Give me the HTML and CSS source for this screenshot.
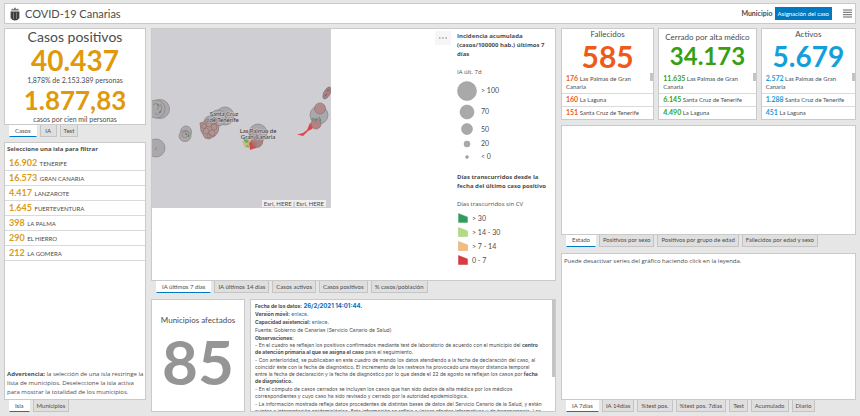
FILE: index.html
```html
<!DOCTYPE html>
<html lang="es">
<head>
<meta charset="utf-8">
<title>COVID-19 Canarias</title>
<link rel="stylesheet" href="styles.css">
</head>
<body>
<header class="bar">
  <svg class="crest" viewBox="0 0 10 14" aria-hidden="true">
    <path d="M1 3.4 2 1.4 3.4 2.2 5 .3 6.6 2.2 8 1.4 9 3.4Z" fill="#777"/>
    <path d="M1 4.4h8v6.2c0 2-2 2.9-4 3-2-.1-4-1-4-3z" fill="#3d3d3d"/>
    <path d="M.6 4.4v7M9.400 4.400v7" stroke="#999" stroke-width=".8"/>
    <path d="M3.500 5.500v6.500M6.500 5.500v6.500" stroke="#999" stroke-width=".7"/>
  </svg>
  <h1>COVID-19 Canarias</h1>
  <span class="bar-label" id="mun">Municipio</span>
  <button class="primary" aria-labelledby="mun asig"><span id="asig">Asignación del caso</span></button>
  <button class="menu" aria-label="Menú"><svg viewBox="0 0 9 9"><path d="M0 1h9M0 3.300h9M0 5.700h9M0 8h9" stroke="#555" stroke-width=".9"/></svg></button>
</header>
<main class="dash">
  <div class="col left">
    <section class="stack">
      <div class="panel totals">
        <h2>Casos positivos</h2>
        <strong class="n-big">40.437</strong>
        <p>1,878% de 2.153.389 personas</p>
        <strong class="n-mid">1.877,83</strong>
        <p>casos por cien mil personas</p>
      </div>
      <nav class="tabs"><button class="on">Casos</button><button>IA</button><button>Test</button></nav>
    </section>
    <section class="stack grow">
      <div class="panel islands">
        <h3>Seleccione una isla para filtrar</h3>
        <ul>
          <li><b>16.902</b> TENERIFE</li>
          <li><b>16.573</b> GRAN CANARIA</li>
          <li><b>4.417</b> LANZAROTE</li>
          <li><b>1.645</b> FUERTEVENTURA</li>
          <li><b>398</b> LA PALMA</li>
          <li><b>290</b> EL HIERRO</li>
          <li><b>212</b> LA GOMERA</li>
        </ul>
        <p class="warn"><b>Advertencia:</b> la selección de una isla restringe la<br>lista de municipios. Deseleccione la isla activa<br>para mostrar la totalidad de los municipios.</p>
      </div>
      <nav class="tabs"><button class="on">Isla</button><button>Municipios</button></nav>
    </section>
  </div>

  <div class="col middle">
    <section class="stack grow">
      <div class="panel mapbox">
        <div class="map">
          <svg viewBox="0 0 179 179" role="img" aria-label="Mapa de Canarias">
            <g fill="#aaa8ab" stroke="#8b898c" stroke-width=".8">
              <circle cx="8" cy="80" r="9.500"/><circle cx="4" cy="80" r="9"/>
              <circle cx="4" cy="119" r="9"/>
              <ellipse cx="34" cy="103" rx="5.500" ry="6"/><ellipse cx="33" cy="107" rx="6" ry="5.500"/>
              <circle cx="73" cy="87" r="9"/><circle cx="66" cy="89" r="8"/><circle cx="58" cy="93" r="6"/>
              <circle cx="106" cy="104" r="9"/><circle cx="104" cy="111" r="7"/>
              <circle cx="167" cy="86" r="9"/>
            </g>
            <path d="M48 94l4-1 3-3 6 2 6 5-1 6-3 4-6 3-4-1-4-7z" fill="#ad9491" stroke="#8c6f70" stroke-width=".7"/>
            <g fill="none" stroke="#906d6c" stroke-width=".6">
              <circle cx="52" cy="97" r="2.500"/><circle cx="57" cy="95" r="3"/><circle cx="62" cy="98" r="3"/><circle cx="54" cy="102" r="3"/><circle cx="60" cy="104" r="3"/><circle cx="57" cy="107" r="2"/><circle cx="62" cy="92" r="3"/>
              <path d="M1 76l3-2 3 3-2 4M8 75l2 4-2 5M3 84l3 2M3 121l2-3M31 103l4-1 2 4-4 3-3-2z"/>
            </g>
            <path d="M5 75l2 2M9 82l-2 2M33 104l2 2M37 106l-1 2" stroke="#5b8f68" stroke-width="1.500"/>
            <path d="M90 112l6-3 3 3-2 6-4 1z" fill="#c9bb7d"/>
            <path d="M91 110l3-1 3 4-3 1zM94 117l2-1 1 3z" fill="#65a765"/>
            <path d="M97 114l3-2 5 2-1 5-6 2z" fill="#cf4d4d"/>
            <circle cx="105" cy="113" r="5.500" fill="#a77c7c" stroke="#8b6969" stroke-width=".6" opacity=".8"/>
            <path d="M97 104l2 3M104 104l1 5" stroke="#c06464" stroke-width="1"/>
            <path d="M145 105.500l6-1.500 4-3 3-7 4 3-2 3-4 2-5 5z" fill="#dd4549"/>
            <circle cx="168" cy="79.500" r="5.500" fill="#b08b8c" stroke="#996f70" stroke-width=".7"/>
            <circle cx="164" cy="95" r="5" fill="#b08385" stroke="#8f6f72" stroke-width=".7"/>
            <path d="M159 91l3-2M163 93l2-4M169 92l-2-4" stroke="#599277" stroke-width="1.200"/>
            <ellipse cx="175" cy="64" rx="3" ry="6.500" transform="rotate(28 175 64)" fill="#9c8688" stroke="#7d6a6d" stroke-width=".7"/>
            <path d="M173 67l2-2M175 62l2-1" stroke="#a63f47" stroke-width="1"/>
            <g class="maplabel" text-anchor="middle">
              <text x="72" y="87">Santa Cruz</text><text x="72" y="93">de Tenerife</text>
              <text x="106" y="104">Las Palmas de</text><text x="106" y="110">Gran Canaria</text>
            </g>
          </svg>
          <span class="credit">Esri, HERE | Esri, HERE</span>
        </div>
        <button class="more" aria-label="Opciones"><svg viewBox="0 0 8 2"><path d="M0 1h1.500M3.200 1h1.500M6.400 1h1.500" stroke="#777" stroke-width="1"/></svg></button>
        <aside class="legend">
          <h3>Incidencia acumulada<br>(casos/100000 hab.) últimos 7<br>días</h3>
          <p>IA últ. 7d</p>
          <ul class="sizes">
            <li class="s1"><svg viewBox="0 0 20 20"><circle cx="10" cy="10" r="9.500"/></svg>&gt; 100</li>
            <li class="s2"><svg viewBox="0 0 20 20"><circle cx="10" cy="10" r="7"/></svg>70</li>
            <li class="s3"><svg viewBox="0 0 20 20"><circle cx="10" cy="10" r="5.500"/></svg>50</li>
            <li class="s4"><svg viewBox="0 0 20 20"><circle cx="10" cy="10" r="3"/></svg>20</li>
            <li class="s4"><svg viewBox="0 0 20 20"><circle cx="10" cy="10" r="1.500"/></svg>&lt; 0</li>
          </ul>
          <h3>Días transcurridos desde la<br>fecha del último caso positivo</h3>
          <p>Días trascurridos sin CV</p>
          <ul class="colors">
            <li><svg viewBox="0 0 10 10"><path d="M.500.500 9.500 4v5.500h-9z" fill="#329a5d" stroke="#55a877" stroke-width=".5"/></svg>&gt; 30</li>
            <li><svg viewBox="0 0 10 10"><path d="M.500.500 9.500 4v5.500h-9z" fill="#b1dc83" stroke="#a1c87c" stroke-width=".5"/></svg>&gt; 14 - 30</li>
            <li><svg viewBox="0 0 10 10"><path d="M.500.500 9.500 4v5.500h-9z" fill="#f6bb7c" stroke="#dba770" stroke-width=".5"/></svg>&gt; 7 - 14</li>
            <li><svg viewBox="0 0 10 10"><path d="M.500.500 9.500 4v5.500h-9z" fill="#dc3a43" stroke="#c23a41" stroke-width=".5"/></svg>0 - 7</li>
          </ul>
        </aside>
      </div>
      <nav class="tabs"><button class="on">IA últimos 7 días</button><button>IA últimos 14 días</button><button>Casos activos</button><button>Casos positivos</button><button>% casos/población</button></nav>
    </section>
    <section class="bottom">
      <div class="panel affected"><h2>Municipios afectados</h2><strong>85</strong></div>
      <article class="panel info">
        <div class="info-text">
          <p class="meta"><b>Fecha de los datos:</b> <b class="date">26/2/2021 14:01:44.</b></p>
          <p class="meta"><b>Versión móvil:</b> <a href="#movil">enlace.</a></p>
          <p class="meta"><b>Capacidad asistencial:</b> <a href="#capacidad">enlace</a>.</p>
          <p class="meta">Fuente: Gobierno de Canarias (Servicio Canario de Salud)</p>
          <p class="meta"><b>Observaciones:</b></p>
          <p class="note">- En el cuadro se reflejan los positivos confirmados mediante test de laboratorio de acuerdo con el municipio del <b>centro<br>de atención primaria al que se asigna el caso</b> para el seguimiento.</p>
          <p class="note">- Con anterioridad, se publicaban en este cuadro de mando los datos atendiendo a la fecha de declaración del caso, al<br>coincidir éste con la fecha de diagnóstico. El incremento de los rastreos ha provocado una mayor distancia temporal<br>entre la fecha de declaración y la fecha de diagnóstico por lo que desde el 22 de agosto se reflejan los casos por <b>fecha<br>de diagnóstico.</b></p>
          <p class="note">- En el cómputo de casos cerrados se incluyen los casos que han sido dados de alta médica por los médicos<br>correspondientes y cuyo caso ha sido revisado y cerrado por la autoridad epidemiológica.</p>
          <p class="note">- La información mostrada refleja datos procedentes de distintas bases de datos del Servicio Canario de la Salud, y están<br>sujetos a interpretación epidemiológica. Esta información se refleja a únicos efectos informativos y de transparencia. Los</p>
        </div>
        <span class="thumb long"></span>
      </article>
    </section>
  </div>

  <div class="col right">
    <section class="trio">
      <div class="panel kpi red"><h2>Fallecidos</h2><strong>585</strong>
        <div class="list"><ul><li><b>176</b> Las Palmas de Gran Canaria</li><li><b>160</b> La Laguna</li><li><b>151</b> Santa Cruz de Tenerife</li></ul><span class="thumb"></span></div></div>
      <div class="panel kpi green"><h2>Cerrado por alta médico</h2><strong>34.173</strong>
        <div class="list"><ul><li><b>11.635</b> Las Palmas de Gran Canaria</li><li><b>6.145</b> Santa Cruz de Tenerife</li><li><b>4.490</b> La Laguna</li></ul><span class="thumb"></span></div></div>
      <div class="panel kpi blue"><h2>Activos</h2><strong>5.679</strong>
        <div class="list"><ul><li><b>2.572</b> Las Palmas de Gran Canaria</li><li><b>1.288</b> Santa Cruz de Tenerife</li><li><b>451</b> La Laguna</li></ul><span class="thumb"></span></div></div>
    </section>
    <section class="stack charts-a">
      <div class="panel"></div>
      <nav class="tabs"><button class="on">Estado</button><button>Positivos por sexo</button><button>Positivos por grupo de edad</button><button>Fallecidos por edad y sexo</button></nav>
    </section>
    <section class="stack charts-b">
      <div class="panel"><p class="hint">Puede desactivar series del gráfico haciendo click en la leyenda.</p></div>
      <nav class="tabs"><button class="on">IA 7días</button><button>IA 14días</button><button>%test pos.</button><button>%test pos. 7días</button><button>Test</button><button>Acumulado</button><button>Diario</button></nav>
    </section>
  </div>
</main>
</body>
</html>
```

FILE: styles.css
```css
* { box-sizing: border-box; }
html { height: 100%; }
body {
  height: 100%;
  margin: 0;
  padding: 3px 4px 4px;
  display: flex;
  flex-direction: column;
  gap: 4px;
  overflow: hidden;
  background: #e6e6e6;
  color: #4c4c4c;
  font: 7px/9px Lato, "Open Sans", sans-serif;
}
h1, h2, h3, p, ul { margin: 0; padding: 0; font-weight: 400; }
ul { list-style: none; }
svg { display: block; }
button { font: inherit; color: inherit; margin: 0; border: 0; }
b, h3 { font-weight: 700; }
h3, .warn, .legend p, .hint { font-family: "Open Sans", sans-serif; font-size: 6px; }
.panel { background: #fff; border: 1px solid #cacaca; overflow: hidden; min-width: 0; }

.bar {
  flex: none;
  display: flex;
  align-items: center;
  height: 21px;
  padding: 0 3px 0 5px;
  background: #fff;
  border: 1px solid #cacaca;
}
.crest { width: 10px; height: 14px; }
.bar h1 { flex: 1; padding-left: 5px; font-size: 11px; line-height: 16px; }
.bar-label { font-weight: 700; }
.primary {
  margin-left: 2px;
  height: 13px;
  padding: 0 3px;
  background: #0079c1;
  color: #fff;
  font-size: 6px;
}
.menu { margin-left: 11px; padding: 0; background: none; }
.menu svg { width: 9px; height: 9px; }

.dash {
  flex: 1;
  min-height: 0;
  display: grid;
  grid-template-columns: 142fr 405fr 295fr;
  gap: 5px;
}
.col { display: flex; flex-direction: column; gap: 6px; min-width: 0; min-height: 0; }
.stack { display: flex; flex-direction: column; min-height: 0; }
.stack > .panel { flex: 1; min-height: 0; }
.stack > .totals { flex: none; }
.grow { flex: 1; }

.tabs { display: flex; flex: none; gap: 3px; padding-left: 5px; }
.tabs button {
  height: 12px;
  padding: 0 3px;
  min-width: 17px;
  background: #dfdfdf;
  border: 1px solid #c4c4c4;
  border-top: 0;
  font-size: 6px;
  line-height: 10px;
  white-space: nowrap;
}
.tabs .on { padding: 0 5px; background: #fff; border-color: #fff; border-bottom-color: #0079c1; }

.totals { height: 97px; text-align: center; white-space: nowrap; }
.totals h2 { font-size: 14px; line-height: 16px; }
.totals strong { display: block; }
.n-big, .n-mid { color: #df9a0b; }
.n-big { font-size: 28px; line-height: 31px; }
.n-mid { font-size: 26px; line-height: 30px; }

.islands { display: flex; flex-direction: column; }
.left { gap: 5px; }
.islands h3 { padding: 2px; }
.islands li { height: 15px; padding-left: 4px; border-bottom: 1px solid #dadada; font-size: 6px; line-height: 14px; }
.islands li b { margin-right: 1px; color: #d99b18; font-size: 9px; }
.warn { margin-top: auto; padding: 0 2px 2px; white-space: nowrap; }

.mapbox { display: flex; }
.map { position: relative; flex: none; width: 179px; height: 179px; background: #cfced3; }
.maplabel { font-size: 6px; fill: #333; stroke: #cfced3; stroke-width: 1px; paint-order: stroke; }
.credit { position: absolute; right: 5px; bottom: 1px; padding: 0 2px; background: #efeff0; font-size: 6px; line-height: 7px; }
.more { margin: 2px 6px 0 auto; width: 16px; height: 14px; padding: 0 4px; background: #f6f6f6; }
.legend { width: 98px; padding-top: 3px; white-space: nowrap; }
.legend p { padding: 9px 0 2px; }
.sizes li, .colors li { display: flex; align-items: center; gap: 4px; }
.sizes svg { width: 20px; height: 20px; fill: #a9a9a9; stroke: #949494; stroke-width: .5; }
.sizes { margin-bottom: 10px; }
.sizes li { height: 13px; }
.sizes .s1 { height: 23px; }
.sizes .s2 { height: 19px; }
.sizes .s3 { height: 16px; }
.colors li { height: 14px; }
.colors svg { width: 10px; height: 10px; margin-left: 1px; }

.bottom { display: grid; grid-template-columns: 94fr 306fr; gap: 5px; height: 113px; }
.affected { padding-top: 14px; text-align: center; }
.affected h2 { font-size: 8px; line-height: 12px; }
.affected strong { display: block; color: #959595; font-size: 62px; line-height: 70px; }
.info { position: relative; padding: 2px 4px; font-family: Inter, "Open Sans", sans-serif; font-size: 5px; }
.info-text { white-space: nowrap; }
.meta { line-height: 8px; }
.note { margin-bottom: 1px; line-height: 7px; }
.date { color: #0a6ebd; font-size: 6px; line-height: 7px; }
.info a { color: #1173a8; text-decoration: none; }
.thumb { position: absolute; top: 0; right: 0; width: 3px; height: 8px; background: #c4c4c4; }
.thumb.long { height: 77px; }

.right { gap: 5px; }
.trio { display: grid; grid-template-columns: 93fr 98fr 95fr; gap: 4px; height: 92px; }
.kpi { display: flex; flex-direction: column; text-align: center; }
.kpi h2 { font-size: 8px; line-height: 10px; white-space: nowrap; }
.kpi strong { line-height: 34px; }
.list { position: relative; flex: none; margin-top: auto; text-align: left; font-size: 6px; line-height: 8px; }
.list li { padding: 2px 6px 2px 4px; border-bottom: 1px solid #dadada; }
.list li:last-child { border: 0; }
.list b { font-size: 7px; line-height: 7px; }
.kpi.red strong { font-size: 30px; }
.kpi.green strong { font-size: 24px; line-height: 28px; }
.kpi.blue strong { font-size: 28px; }
.kpi.green h2 { padding-top: 3px; }
.red strong, .red b { color: #ee5a17; }
.green strong, .green b { color: #389f13; }
.blue strong, .blue b { color: #149fdb; }
.charts-a { flex: 122; margin-bottom: 1px; }
.charts-b { flex: 160; }
.hint { padding: 3px 2px; }
```
